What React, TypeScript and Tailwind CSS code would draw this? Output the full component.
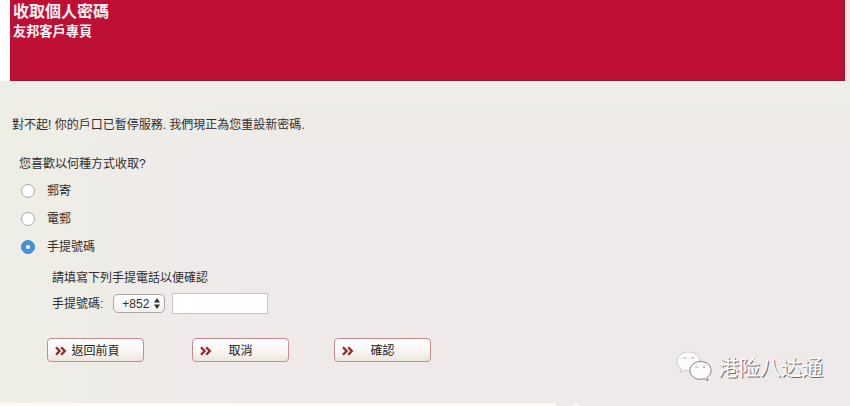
import { useState } from 'react';

const sans = "font-['Liberation_Sans','Noto_Sans_CJK_TC',sans-serif]";

interface RadioProps {
  label: string;
  checked: boolean;
  onSelect: () => void;
}

const Radio = ({ label, checked, onSelect }: RadioProps) => {
  return (
    <label className="flex h-7 items-center">
      <input
        type="radio"
        name="method"
        className="sr-only"
        checked={checked}
        onChange={onSelect}
      />
      <span
        className={`flex h-[14px] w-[14px] items-center justify-center rounded-full border ${
          checked ? 'border-[#3f88cc] bg-[#4592d8]' : 'border-[#aaa8a8] bg-white'
        }`}
      >
        {checked && <span className="h-1 w-1 rounded-full bg-white" />}
      </span>
      <span className="ml-3">{label}</span>
    </label>
  );
};

interface ActionButtonProps {
  label: string;
  className?: string;
}

const ActionButton = ({ label, className }: ActionButtonProps) => {
  return (
    <button
      type="button"
      className={`${className} flex h-6 w-[97px] items-center rounded-[4px] border border-[#c98b90] bg-linear-to-b from-white via-[#fbf8f5] to-[#ebe5dd] pl-[7px] text-[12px] text-[#222]`}
    >
      <svg
        className="mt-[2px]"
        width="12"
        height="10"
        viewBox="0 0 12 10"
        fill="none"
        stroke="#93282f"
        strokeWidth="2.3"
      >
        <path d="M1 1.2 4.6 5 1 8.8M6.2 1.2 9.8 5 6.2 8.8" />
      </svg>
      <span className="flex-1 pt-[2px] pr-[19px] text-center whitespace-nowrap">
        {label}
      </span>
    </button>
  );
};

const Watermark = () => {
  return (
    <div className="absolute top-[350px] left-[675px] flex items-center">
      <svg
        width="38"
        height="32"
        viewBox="0 0 38 32"
        fill="#fcfbfb"
        stroke="#c4c0c0"
        strokeWidth="0.8"
      >
        <path d="M13.5 2C7 2 2 6.2 2 11.500c0 3 1.600 5.600 4.100 7.300L5 22.400l4.300-2.200c1.400.4 2.800.6 4.200.6 6.400 0 11.500-4.100 11.500-9.300S19.900 2 13.500 2Z" />
        <path
          stroke="#696565"
          d="M25.500 11.500c-6 0-10.600 3.900-10.600 8.900s4.600 8.900 10.600 8.900c1.300 0 2.600-.2 3.800-.6l3.700 2-1-3.200c2.500-1.600 4.100-4.100 4.100-7.100 0-5-4.700-8.900-10.600-8.900Z"
        />
        <g fill="none" stroke="#777373">
          <path d="M8.500 8.500q1-1.800 2.200 0M16.500 8.500q1-1.800 2.200 0M20.500 17.500q1-1.600 2 0M28 17.500q1-1.600 2 0" />
        </g>
      </svg>
      <span className="ml-[5px] font-['Noto_Sans_CJK_SC',sans-serif] text-[21px] leading-8 whitespace-nowrap text-[#fbfafa] [text-shadow:1px_1px_0_#6f6a6a]">
        港险八达通
      </span>
    </div>
  );
};

export default function App() {
  const [method, setMethod] = useState('mobile');

  return (
    <div
      className={`${sans} relative flex h-[406px] w-[850px] flex-col overflow-hidden bg-white text-[12px] leading-4 text-[#302e2e]`}
    >
      <header className="flex h-[81px] shrink-0 bg-linear-to-r from-white from-50% to-[#fae4e5] to-50%">
        <div className="ml-[10px] w-[835px] border-r border-b border-[#8e1c36] bg-[#bd1034] pl-[3px] font-bold text-[#fff0f2]">
          <h1 className="pt-[2px] text-[16px] leading-5">收取個人密碼</h1>
          <h2 className="text-[13.2px] leading-5">友邦客戶專頁</h2>
        </div>
      </header>

      <main className="h-[322px] shrink-0 bg-linear-to-r from-[#eeeee5] via-[#efebe9] via-20% to-[#efe9e9] to-40%">
        <div className="h-full bg-linear-to-b from-[#eeeee6] to-transparent to-22% pt-[36px] pl-[12px]">
          <p>對不起! 你的戶口已暫停服務. 我們現正為您重設新密碼.</p>
          <p className="mt-[23px] ml-[7px]">您喜歡以何種方式收取?</p>

          <div className="mt-[5px] ml-[9px]">
            <Radio
              label="郵寄"
              checked={method === 'post'}
              onSelect={() => setMethod('post')}
            />
            <Radio
              label="電郵"
              checked={method === 'email'}
              onSelect={() => setMethod('email')}
            />
            <Radio
              label="手提號碼"
              checked={method === 'mobile'}
              onSelect={() => setMethod('mobile')}
            />
          </div>

          <p className="mt-[9px] ml-10">請填寫下列手提電話以便確認</p>
          <div className="mt-[7px] ml-10 flex h-[21px] items-center">
            <span>手提號碼:</span>
            <div className="ml-[10px] flex h-[19px] w-[52px] items-center rounded-[5px] border border-[#aaa6a6] bg-linear-to-b from-white to-[#f3f0f0] pl-2">
              +852
              <svg
                className="ml-[5px]"
                width="6"
                height="11"
                viewBox="0 0 6 11"
                fill="#333"
              >
                <path d="M3 0 6 4.500H0ZM3 11 0 6.500h6Z" />
              </svg>
            </div>
            <input
              type="text"
              className="ml-[7px] h-[21px] w-[96px] border border-[#c9c5c5] bg-white outline-none"
            />
          </div>

          <div className="mt-6 ml-[35px] flex">
            <ActionButton label="返回前頁" />
            <ActionButton label="取消" className="ml-[48px]" />
            <ActionButton label="確認" className="ml-[45px]" />
          </div>
        </div>
      </main>

      <footer className="flex h-[3px] shrink-0 bg-[#efe9e9]">
        <div className="w-[556px] bg-[#fcf9f7]" />
        <div className="ml-[17px] h-[3px] w-[6px] rounded-t-full bg-[#faf6f6]" />
      </footer>

      <Watermark />
    </div>
  );
}
